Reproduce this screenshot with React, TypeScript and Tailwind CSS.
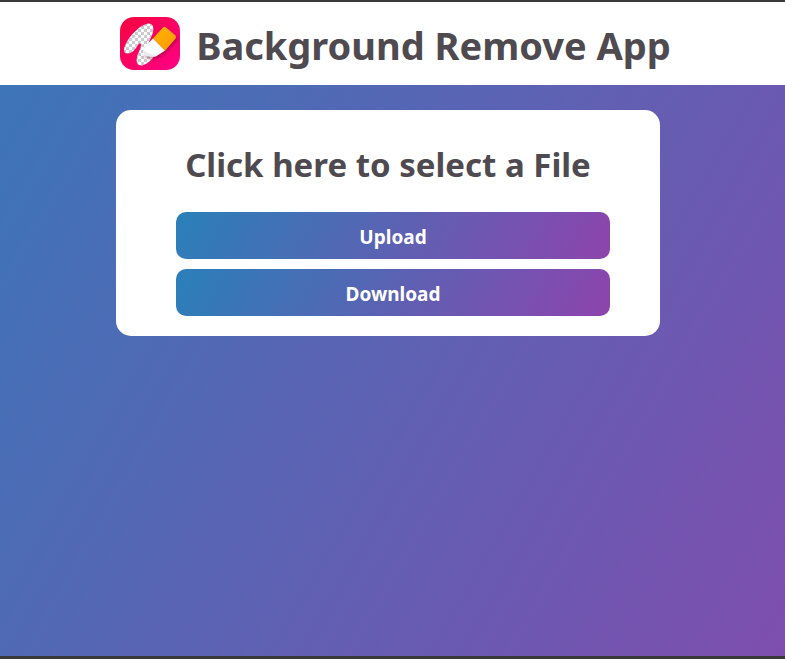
import type { ReactNode } from "react";

function Logo() {
  return (
    <svg viewBox="0 0 60 53" className="h-[53px] w-[60px] shrink-0" role="img" aria-label="Eraser logo">
      <defs>
        <linearGradient id="logoBg" x1="0" y1="0" x2="1" y2="1">
          <stop offset="0" stopColor="#f5063f" />
          <stop offset="1" stopColor="#ff0088" />
        </linearGradient>
        <linearGradient id="eraserCap" x1="0" y1="0" x2="1" y2="1">
          <stop offset="0" stopColor="#ffb608" />
          <stop offset="1" stopColor="#fb9800" />
        </linearGradient>
        <pattern id="checker" width="6" height="6" patternUnits="userSpaceOnUse">
          <rect width="6" height="6" fill="#fff" />
          <path d="M0 0h3v3H0zM3 3h3v3H3z" fill="#cbcbcf" />
        </pattern>
        <filter id="eraserShadow" x="-30%" y="-30%" width="160%" height="160%">
          <feDropShadow dx="1.5" dy="2" stdDeviation="1.5" floodColor="#7a0030" floodOpacity="0.5" />
        </filter>
      </defs>
      <rect width="60" height="53" rx="14" fill="url(#logoBg)" />
      <path
        d="M4 33C5 23 19 8 28 6.500C33 6 34 10 33 15C32 19 29 24 28 28L35 37C33 42 28 47 22 48.500C17 49 16 45 17 40C18 36 21 31 21 28C21 26 19 26 18 28C15 33 12 36 8 36.500C5 37 4 35 4 33Z"
        fill="url(#checker)"
      />
      <g filter="url(#eraserShadow)">
        <path d="M33 21.500L45 33.500L38 38Q36 39.500 34 39.500L26 39Q23 38 23 35L23.500 32Q24 30.500 25 29.500Z" fill="#fff" />
        <path d="M23.500 33Q28 37 36 38.500Q35 39.500 34 39.500L26 39Q23 38 23.500 33Z" fill="#ebe8ed" />
        <path d="M43 10.500Q44.500 9 46 10.500L55.500 18.500Q56.500 20 55.500 21.500L45 33.500L33 21.500Z" fill="url(#eraserCap)" />
      </g>
    </svg>
  );
}

function ActionButton({ children }: { children: ReactNode }) {
  return (
    <button
      type="button"
      className="h-[47px] w-full cursor-pointer rounded-[10px] bg-[linear-gradient(120deg,#2980b9,#8e44ad)] pt-0.5 text-[19px] leading-6 font-bold text-white"
    >
      {children}
    </button>
  );
}

export default function App() {
  return (
    <div className="flex min-h-screen flex-col border-t-2 border-b-3 border-[#393939] font-['Noto_Sans','Open_Sans',sans-serif] text-[#4f4a50]">
      <header className="flex h-[83px] items-center justify-center gap-4 bg-white pr-2.5 pl-4">
        <Logo />
        <h1 className="pt-0.5 text-[38px] leading-[52px] font-bold whitespace-nowrap">Background Remove App</h1>
      </header>
      <main className="flex flex-1 justify-center bg-[linear-gradient(120deg,#3d75b8,#7e4eae)] pt-[25px] pr-[125px] pl-[116px]">
        <section className="flex w-full max-w-[544px] flex-col self-start rounded-[15px] bg-white pt-[30px] pr-[50px] pb-5 pl-[60px]">
          <h2 className="mb-[22px] -ml-2.5 text-center text-[33px] leading-[50px] font-bold whitespace-nowrap">
            Click here to select a File
          </h2>
          <div className="flex flex-col gap-[10px]">
            <ActionButton>Upload</ActionButton>
            <ActionButton>Download</ActionButton>
          </div>
        </section>
      </main>
    </div>
  );
}
